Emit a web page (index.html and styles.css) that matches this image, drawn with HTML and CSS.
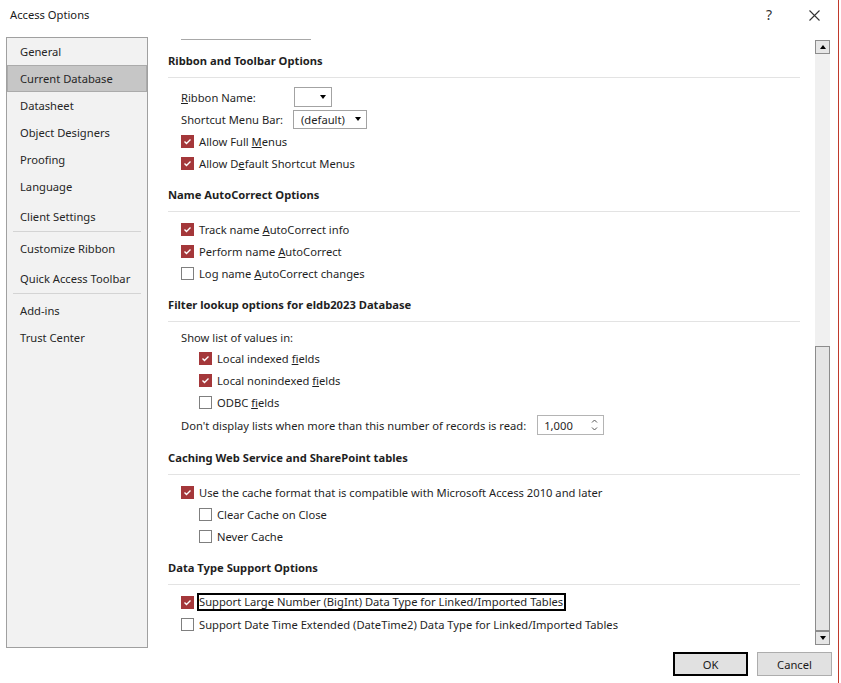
FILE: index.html
```html
<!DOCTYPE html>
<html>
<head>
<meta charset="utf-8">
<title>Access Options</title>
<link rel="stylesheet" href="styles.css">
</head>
<body>
<div class="window">
  <div class="titlebar">
    <span class="title">Access Options</span>
    <span class="help">?</span>
    <span class="close"><svg width="11" height="11" viewBox="0 0 11 11"><path d="M0.5 0.5 L10.5 10.5 M10.5 0.5 L0.5 10.5" stroke="#333" stroke-width="1.1" fill="none"/></svg></span>
  </div>
  <div class="main">
    <nav class="nav">
      <div class="nav-item">General</div>
      <div class="nav-item selected">Current Database</div>
      <div class="nav-item">Datasheet</div>
      <div class="nav-item">Object Designers</div>
      <div class="nav-item">Proofing</div>
      <div class="nav-item">Language</div>
      <div class="nav-item gap">Client Settings</div>
      <div class="nav-sep"></div>
      <div class="nav-item">Customize Ribbon</div>
      <div class="nav-item gap">Quick Access Toolbar</div>
      <div class="nav-sep"></div>
      <div class="nav-item">Add-ins</div>
      <div class="nav-item">Trust Center</div>
    </nav>
    <div class="pane">
      <div class="scroll">
        <div class="cut-box"></div>

        <h2 class="sec-head">Ribbon and Toolbar Options</h2>
        <div class="rows first">
          <div class="row">
            <span class="label"><u>R</u>ibbon Name:</span>
            <span class="combo combo-sm"><span class="caret"></span></span>
          </div>
          <div class="row">
            <span class="label">Shortcut Menu Bar:</span>
            <span class="combo combo-md"><span class="combo-text">(default)</span><span class="caret"></span></span>
          </div>
          <div class="row"><span class="cb on"><svg width="11" height="11" viewBox="0 0 11 11"><path d="M2.5 5.5 L4.5 7.5 L8.5 3.5" stroke="#fff" stroke-width="1.4" fill="none"/></svg></span><span>Allow Full <u>M</u>enus</span></div>
          <div class="row"><span class="cb on"><svg width="11" height="11" viewBox="0 0 11 11"><path d="M2.5 5.5 L4.5 7.5 L8.5 3.5" stroke="#fff" stroke-width="1.4" fill="none"/></svg></span><span>Allow D<u>e</u>fault Shortcut Menus</span></div>
        </div>

        <h2 class="sec-head">Name AutoCorrect Options</h2>
        <div class="rows">
          <div class="row"><span class="cb on"><svg width="11" height="11" viewBox="0 0 11 11"><path d="M2.5 5.5 L4.5 7.5 L8.5 3.5" stroke="#fff" stroke-width="1.4" fill="none"/></svg></span><span>Track name <u>A</u>utoCorrect info</span></div>
          <div class="row"><span class="cb on"><svg width="11" height="11" viewBox="0 0 11 11"><path d="M2.5 5.5 L4.5 7.5 L8.5 3.5" stroke="#fff" stroke-width="1.4" fill="none"/></svg></span><span>Perform name <u>A</u>utoCorrect</span></div>
          <div class="row"><span class="cb"></span><span>Log name <u>A</u>utoCorrect changes</span></div>
        </div>

        <h2 class="sec-head">Filter lookup options for eldb2023 Database</h2>
        <div class="rows">
          <div class="row short"><span>Show list of values in:</span></div>
          <div class="row indent"><span class="cb on"><svg width="11" height="11" viewBox="0 0 11 11"><path d="M2.5 5.5 L4.5 7.5 L8.5 3.5" stroke="#fff" stroke-width="1.4" fill="none"/></svg></span><span>Local indexed <u>f</u>ields</span></div>
          <div class="row indent"><span class="cb on"><svg width="11" height="11" viewBox="0 0 11 11"><path d="M2.5 5.5 L4.5 7.5 L8.5 3.5" stroke="#fff" stroke-width="1.4" fill="none"/></svg></span><span>Local nonindexed <u>f</u>ields</span></div>
          <div class="row indent"><span class="cb"></span><span>ODBC <u>f</u>ields</span></div>
          <div class="row tall">
            <span>Don't display lists when more than this number of records is read:</span>
            <span class="spin"><span class="spin-text">1,000</span><svg class="spin-arrows" width="7" height="14" viewBox="0 0 7 14"><path d="M1 4.5 L3.5 2 L6 4.5 M1 9.5 L3.5 12 L6 9.5" stroke="#555" stroke-width="1" fill="none"/></svg></span>
          </div>
        </div>

        <h2 class="sec-head">Caching Web Service and SharePoint tables</h2>
        <div class="rows">
          <div class="row"><span class="cb on"><svg width="11" height="11" viewBox="0 0 11 11"><path d="M2.5 5.5 L4.5 7.5 L8.5 3.5" stroke="#fff" stroke-width="1.4" fill="none"/></svg></span><span>Use the cache format that is compatible with Microsoft Access 2010 and later</span></div>
          <div class="row indent"><span class="cb"></span><span>Clear Cache on Close</span></div>
          <div class="row indent"><span class="cb"></span><span>Never Cache</span></div>
        </div>

        <h2 class="sec-head">Data Type Support Options</h2>
        <div class="rows">
          <div class="row"><span class="cb on"><svg width="11" height="11" viewBox="0 0 11 11"><path d="M2.5 5.5 L4.5 7.5 L8.5 3.5" stroke="#fff" stroke-width="1.4" fill="none"/></svg></span><span class="focus">Support Large Number (BigInt) Data Type for Linked/Imported Tables</span></div>
          <div class="row"><span class="cb"></span><span>Support Date Time Extended (DateTime2) Data Type for Linked/Imported Tables</span></div>
        </div>
      </div>
      <div class="scrollbar">
        <div class="sb-btn"><span class="tri-up"></span></div>
        <div class="sb-track"><div class="sb-thumb"></div></div>
        <div class="sb-btn"><span class="tri-down"></span></div>
      </div>
    </div>
  </div>
  <div class="footer">
    <button class="btn default">OK</button>
    <button class="btn">Cancel</button>
  </div>
</div>
</body>
</html>
```

FILE: styles.css
```css
* { box-sizing: border-box; }
html, body {
  margin: 0;
  padding: 0;
  background: #fff;
}
body {
  font-family: "Noto Sans", "Open Sans", sans-serif;
  font-size: 11.2px;
  color: #1f1f1f;
}
.window {
  width: 839px;
  height: 683px;
  border-right: 1px solid #c0392b;
  background: #fff;
  display: flex;
  flex-direction: column;
}
.titlebar {
  height: 37px;
  display: flex;
  align-items: flex-start;
  padding: 7px 0 0 10px;
}
.title {
  line-height: 16px;
  color: #1a1a1a;
}
.help {
  margin-left: auto;
  font-size: 14px;
  line-height: 16px;
  color: #333;
  margin-top: 0;
  margin-right: 37px;
}
.close {
  margin-top: 3px;
  margin-right: 18px;
  display: flex;
}
.main {
  display: flex;
  height: 611px;
}
.nav {
  margin-left: 6px;
  width: 142px;
  height: 611px;
  background: #f2f2f2;
  border: 1px solid #a0a0a0;
  display: flex;
  flex-direction: column;
}
.nav-item {
  height: 27px;
  line-height: 27px;
  padding-left: 13px;
  color: #262626;
  white-space: nowrap;
}
.nav-item.gap { margin-top: 3px; }
.nav-item.selected {
  background: #c6c6c6;
  box-shadow: inset 0 0 0 1px #ababab;
}
.nav-sep {
  height: 1px;
  background: #d4d4d4;
  margin: 1px 6px 3px 6px;
}
.pane {
  flex: 1;
  display: flex;
  margin-left: 20px;
  margin-right: 8px;
}
.scroll {
  flex: 1;
  overflow: hidden;
  padding-right: 15px;
}
.cut-box {
  margin-left: 13px;
  width: 130px;
  height: 3px;
  border-bottom: 1px solid #a8a8a8;
}
.sec-head {
  margin: 0;
  font-size: 11.2px;
  font-weight: bold;
  line-height: 16px;
  padding: 13px 0 8px 0;
  border-bottom: 1px solid #e3e3e3;
  color: #1f1f1f;
}
.rows {
  padding-top: 6px;
}
.rows.first {
  padding-top: 8px;
}
.row {
  height: 22px;
  display: flex;
  align-items: center;
  padding-left: 13px;
  white-space: nowrap;
}
.row.indent { padding-left: 31px; }
.row.short { height: 19px; }
.row.tall { height: 24px; }
.label {
  width: 113px;
}
.cb {
  width: 13px;
  height: 13px;
  border: 1px solid #7f7f7f;
  background: #fff;
  margin-right: 5px;
  display: flex;
  align-items: center;
  justify-content: center;
  flex: none;
}
.cb.on {
  background: #a4373a;
  border-color: #a4373a;
}
.combo {
  height: 20px;
  border: 1px solid #a3a3a3;
  display: flex;
  align-items: center;
  padding-right: 5px;
  background: #fff;
}
.combo-sm { width: 38px; justify-content: flex-end; }
.combo-md { width: 74px; height: 19px; margin-left: -1px; }
.combo-text { padding-left: 7px; }
.caret {
  margin-left: auto;
  width: 0;
  height: 0;
  border-left: 3.5px solid transparent;
  border-right: 3.5px solid transparent;
  border-top: 4px solid #000;
}
.spin {
  margin-left: 11px;
  width: 67px;
  height: 20px;
  border: 1px solid #b4b4b4;
  display: flex;
  align-items: center;
  padding-left: 6px;
  padding-right: 5px;
}
.spin-arrows { margin-left: auto; }
.focus {
  display: inline-block;
  line-height: 14px;
  height: 14px;
  outline: 2px solid #000;
  padding-right: 1px;
}
.scrollbar {
  width: 15px;
  margin-top: 3px;
  height: 605px;
  background: #f0f0f0;
  display: flex;
  flex-direction: column;
}
.sb-btn {
  height: 14px;
  border: 1px solid #8c8c8c;
  background: #e6e6e6;
  display: flex;
  align-items: center;
  justify-content: center;
}
.tri-up {
  width: 0; height: 0;
  border-left: 3.5px solid transparent;
  border-right: 3.5px solid transparent;
  border-bottom: 4px solid #000;
}
.tri-down {
  width: 0; height: 0;
  border-left: 3.5px solid transparent;
  border-right: 3.5px solid transparent;
  border-top: 4px solid #000;
}
.sb-track {
  flex: 1;
}
.sb-thumb {
  margin-top: 292px;
  height: 285px;
  border: 1px solid #8c8c8c;
  background: #e5e5e5;
}
.footer {
  display: flex;
  justify-content: flex-end;
  gap: 9px;
  padding-right: 6px;
  margin-top: 4px;
}
.btn {
  width: 75px;
  height: 24px;
  font-family: inherit;
  font-size: 11.2px;
  color: #1a1a1a;
  background: #e1e1e1;
  border: 1px solid #adadad;
  padding: 0;
  margin: 0;
}
.btn.default {
  border: 2px solid #000;
}
```
